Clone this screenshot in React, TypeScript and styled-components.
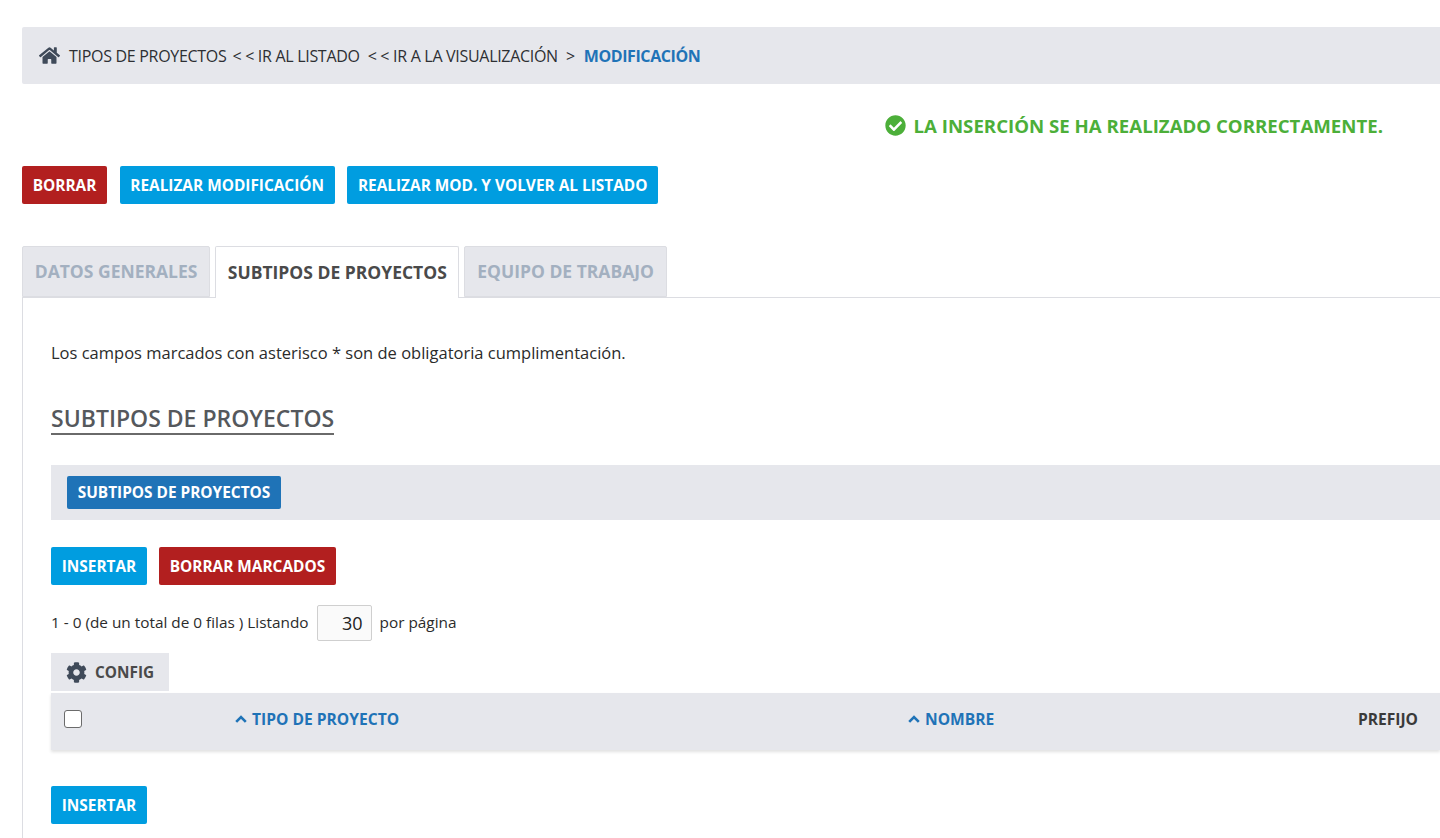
import React from "react";
import styled, { createGlobalStyle } from "styled-components";
import { FaHome, FaCheckCircle, FaCog } from "react-icons/fa";

const GlobalStyle = createGlobalStyle`
  html, body {
    margin: 0;
    padding: 0;
    background: #fff;
    overflow: hidden;
  }
  * {
    box-sizing: border-box;
  }
  body {
    font-family: "Open Sans", "Liberation Sans", sans-serif;
    font-size: 15.35px;
    color: #2b2b2b;
  }
`;

const Page = styled.div`
  width: 1440px;
  height: 838px;
  overflow: hidden;
  padding: 27px 0 0 22px;
`;

const Breadcrumb = styled.nav`
  display: flex;
  align-items: center;
  height: 57px;
  padding-left: 17px;
  background: #e6e7ec;
  border-radius: 2px 0 0 2px;
  font-size: 16px;
  letter-spacing: -0.3px;
  color: #2d2f33;
  white-space: nowrap;
  svg {
    width: 21px;
    height: 19px;
    color: #3f4a59;
    margin-right: 9px;
  }
`;

const Crumb = styled.span<{ $gap?: number }>`
  margin-left: ${({ $gap }) => $gap ?? 0}px;
`;

const CrumbCurrent = styled.span`
  margin-left: 9px;
  font-weight: 700;
  letter-spacing: -0.4px;
  color: #1f73b7;
`;

const Notice = styled.div`
  display: flex;
  justify-content: flex-end;
  align-items: center;
  gap: 8px;
  height: 22px;
  margin-top: 30px;
  padding-right: 57px;
  font-size: 18.65px;
  font-weight: 700;
  color: #4caf39;
  svg {
    width: 21px;
    height: 21px;
  }
`;

const ActionRow = styled.div`
  display: flex;
  gap: 12.5px;
  margin-top: 30px;
`;

const Button = styled.button<{ $tone?: "blue" | "red" }>`
  height: 38px;
  padding: 0 10.7px;
  border: none;
  border-radius: 2px;
  background: ${({ $tone }) => ($tone === "red" ? "#b21f1f" : "#009de0")};
  color: #fff;
  font-family: inherit;
  font-size: 15.4px;
  font-weight: 700;
  white-space: nowrap;
`;

const Tabs = styled.div`
  display: flex;
  gap: 5px;
  margin-top: 42px;
  height: 52px;
  border-bottom: 1px solid #dcdde2;
`;

const Tab = styled.div<{ $active?: boolean }>`
  display: flex;
  align-items: center;
  height: ${({ $active }) => ($active ? "52px" : "51px")};
  padding: 0 11.7px 2px;
  border: 1px solid #dcdde2;
  border-bottom: ${({ $active }) => ($active ? "none" : "1px solid #dcdde2")};
  border-radius: 2px 2px 0 0;
  background: ${({ $active }) => ($active ? "#fff" : "#e6e7ec")};
  color: ${({ $active }) => ($active ? "#4a4a4a" : "#a3b0c0")};
  font-size: 17.5px;
  font-weight: 700;
  white-space: nowrap;
`;

const Panel = styled.section`
  border-left: 1px solid #dcdde2;
  padding: 46px 0 0 28px;
  height: 600px;
`;

const Hint = styled.p`
  margin: 0;
  height: 20px;
  line-height: 18px;
  font-size: 16.5px;
  color: #2b2b2b;
`;

const SectionTitle = styled.h2`
  width: fit-content;
  margin: 41px 0 0;
  height: 30px;
  line-height: 26px;
  border-bottom: 2px solid #6a6a6a;
  font-size: 23px;
  font-weight: 600;
  color: #55585c;
`;

const SubtypeBar = styled.div`
  display: flex;
  align-items: center;
  height: 55px;
  margin-top: 30px;
  padding-left: 16px;
  background: #e6e7ec;
`;

const SubtypeTab = styled.div`
  display: flex;
  align-items: center;
  height: 33px;
  padding: 0 10.7px;
  border-radius: 2px;
  background: #1f73b7;
  color: #fff;
  font-size: 15.4px;
  font-weight: 700;
`;

const ListActions = styled.div`
  display: flex;
  gap: 12px;
  margin-top: 27px;
`;

const Pager = styled.div`
  display: flex;
  align-items: center;
  gap: 8px;
  margin-top: 20px;
  height: 36px;
  color: #2b2b2b;
`;

const PagerText = styled.span`
  padding-bottom: 2px;
`;

const PageSize = styled.div`
  width: 55px;
  height: 36px;
  line-height: 34px;
  padding-right: 8px;
  text-align: right;
  border: 1px solid #cfcfcf;
  border-radius: 2px;
  background: #fafafa;
  font-size: 18px;
  color: #222;
`;

const ConfigTab = styled.div`
  display: flex;
  align-items: center;
  gap: 8px;
  width: 118px;
  height: 38px;
  margin-top: 12px;
  padding-left: 15px;
  background: #e6e7ec;
  font-weight: 700;
  color: #4a4a4a;
  svg {
    width: 21px;
    height: 21px;
    color: #3f4a59;
  }
`;

const TableHead = styled.div`
  display: grid;
  grid-template-columns: 171px 673px 1fr auto;
  align-items: center;
  height: 57px;
  margin-top: 2px;
  padding: 0 22px 5px 13px;
  background: #e6e7ec;
  box-shadow: 0 2px 3px rgba(0, 0, 0, 0.12);
  font-size: 15.6px;
  font-weight: 700;
`;

const CheckBox = styled.span`
  display: block;
  width: 18px;
  height: 18px;
  border: 1px solid #6b6b6b;
  border-radius: 3px;
  background: #fff;
`;

const SortLabel = styled.span`
  display: flex;
  align-items: center;
  gap: 5px;
  color: #1f73b7;
  svg {
    width: 12px;
    height: 8px;
  }
`;

const PlainLabel = styled.span`
  color: #3a3a3a;
`;

const BottomActions = styled.div`
  margin-top: 36px;
`;

function SortArrow() {
  return (
    <svg viewBox="0 0 12 8" fill="none" stroke="currentColor" strokeWidth="2.6">
      <path d="M1.2 6.8 6 2l4.8 4.8" />
    </svg>
  );
}

export default function App() {
  return (
    <>
      <GlobalStyle />
      <Page>
        <Breadcrumb>
          <FaHome />
          <Crumb>TIPOS DE PROYECTOS</Crumb>
          <Crumb $gap={6}>&lt; &lt; IR AL LISTADO</Crumb>
          <Crumb $gap={8}>&lt; &lt; IR A LA VISUALIZACIÓN</Crumb>
          <Crumb $gap={8}>&gt;</Crumb>
          <CrumbCurrent>MODIFICACIÓN</CrumbCurrent>
        </Breadcrumb>
        <Notice>
          <FaCheckCircle />
          LA INSERCIÓN SE HA REALIZADO CORRECTAMENTE.
        </Notice>
        <ActionRow>
          <Button $tone="red">BORRAR</Button>
          <Button>REALIZAR MODIFICACIÓN</Button>
          <Button>REALIZAR MOD. Y VOLVER AL LISTADO</Button>
        </ActionRow>
        <Tabs>
          <Tab>DATOS GENERALES</Tab>
          <Tab $active>SUBTIPOS DE PROYECTOS</Tab>
          <Tab>EQUIPO DE TRABAJO</Tab>
        </Tabs>
        <Panel>
          <Hint>Los campos marcados con asterisco * son de obligatoria cumplimentación.</Hint>
          <SectionTitle>SUBTIPOS DE PROYECTOS</SectionTitle>
          <SubtypeBar>
            <SubtypeTab>SUBTIPOS DE PROYECTOS</SubtypeTab>
          </SubtypeBar>
          <ListActions>
            <Button>INSERTAR</Button>
            <Button $tone="red">BORRAR MARCADOS</Button>
          </ListActions>
          <Pager>
            <PagerText>1 - 0 (de un total de 0 filas ) Listando</PagerText>
            <PageSize>30</PageSize>
            <PagerText>por página</PagerText>
          </Pager>
          <ConfigTab>
            <FaCog />
            CONFIG
          </ConfigTab>
          <TableHead>
            <CheckBox />
            <SortLabel>
              <SortArrow />
              TIPO DE PROYECTO
            </SortLabel>
            <SortLabel>
              <SortArrow />
              NOMBRE
            </SortLabel>
            <PlainLabel>PREFIJO</PlainLabel>
          </TableHead>
          <BottomActions>
            <Button>INSERTAR</Button>
          </BottomActions>
        </Panel>
      </Page>
    </>
  );
}
